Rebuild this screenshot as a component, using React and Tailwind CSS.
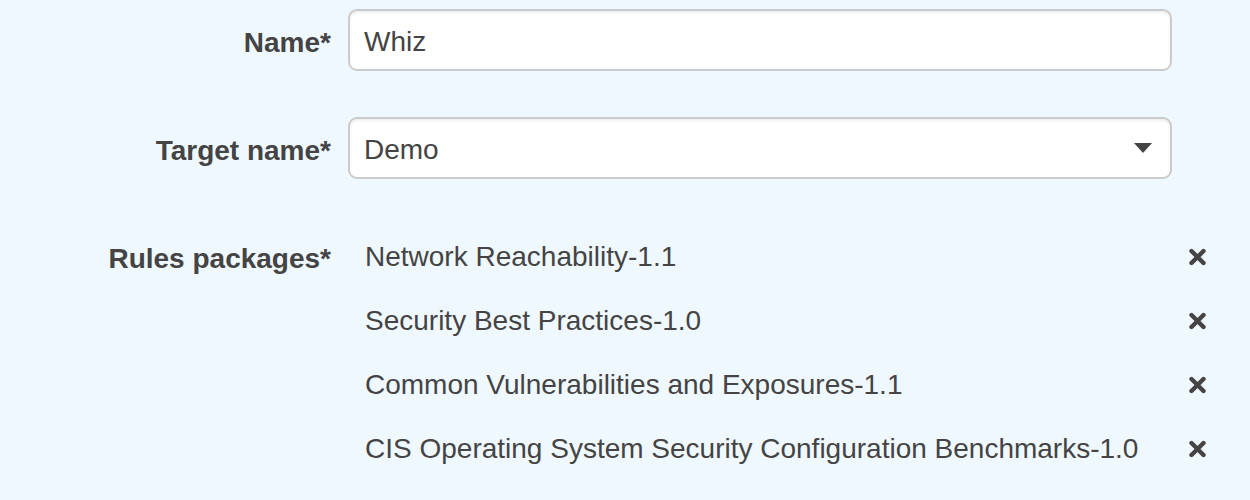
import React from "react";

const rules = [
  "Network Reachability-1.1",
  "Security Best Practices-1.0",
  "Common Vulnerabilities and Exposures-1.1",
  "CIS Operating System Security Configuration Benchmarks-1.0",
];

function XIcon() {
  return (
    <svg width="19" height="18" viewBox="0 0 19 18" className="shrink-0">
      <path d="M3.5 3 L15.5 15 M15.5 3 L3.5 15" stroke="#444" strokeWidth="4.4" strokeLinecap="round" fill="none" />
    </svg>
  );
}

export default function App() {
  return (
    <div
      className="w-[1250px] h-[500px] bg-[#f0f8ff] text-[#444] overflow-hidden"
      style={{ fontFamily: '"Liberation Sans", Arial, Helvetica, sans-serif' }}
    >
      <div className="flex flex-col pt-[9px] gap-[46px]">
        <div className="flex items-center gap-[17px]">
          <div className="w-[331px] text-right font-bold text-[28px] leading-none pt-[5px]">Name*</div>
          <div className="w-[824px] h-[62px] rounded-[9px] border-2 border-[#cbcbcb] bg-white shadow-[inset_0_2px_3px_rgba(0,0,0,0.07)] flex items-center pl-[14px] pt-[3px] text-[28px]">
            Whiz
          </div>
        </div>
        <div className="flex items-center gap-[17px]">
          <div className="w-[331px] text-right font-bold text-[28px] leading-none pt-[5px]">Target name*</div>
          <div className="w-[824px] h-[62px] rounded-[9px] border-2 border-[#cbcbcb] bg-white shadow-[inset_0_2px_3px_rgba(0,0,0,0.07)] flex items-center justify-between pl-[14px] pr-[18px] text-[28px]">
            <span className="pt-[3px]">Demo</span>
            <svg width="18" height="10" viewBox="0 0 18 10">
              <path d="M0 0 H18 L9 10 Z" fill="#444" />
            </svg>
          </div>
        </div>
        <div className="flex items-start gap-[17px]">
          <div className="w-[331px] text-right font-bold text-[28px] leading-[64px] pt-[2px]">Rules packages*</div>
          <div className="w-[859px] flex flex-col pl-[17px]">
            {rules.map((r) => (
              <div key={r} className="h-[64px] flex items-center justify-between text-[28px]">
                <span>{r}</span>
                <XIcon />
              </div>
            ))}
          </div>
        </div>
      </div>
    </div>
  );
}
